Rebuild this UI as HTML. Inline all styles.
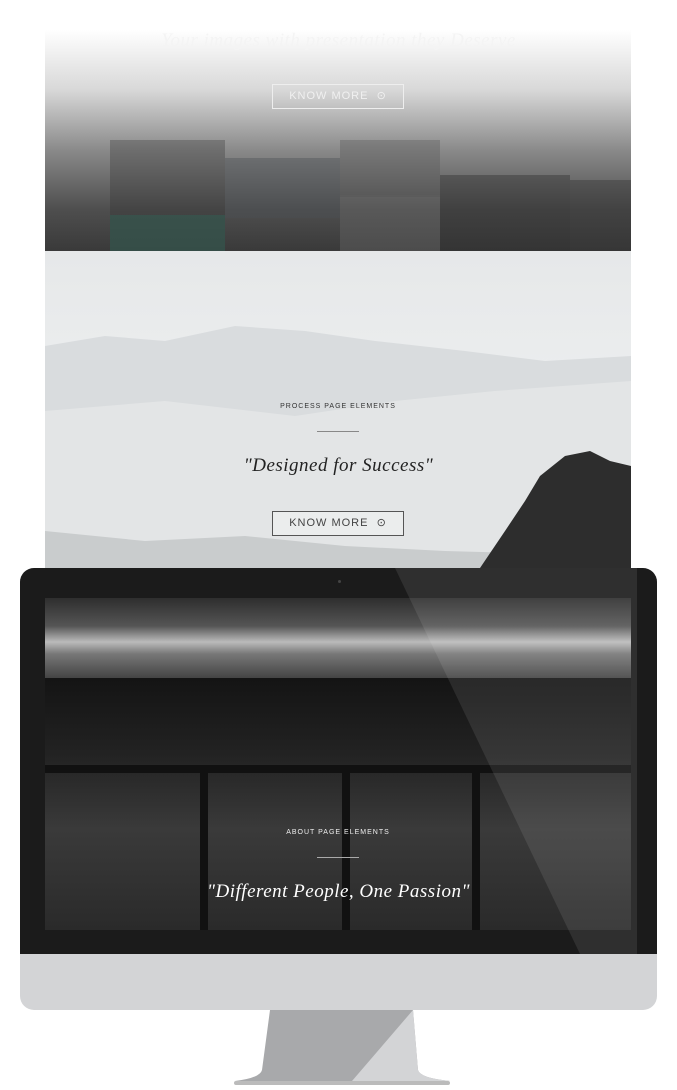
<!DOCTYPE html>
<html><head><meta charset="utf-8"><style>
body{margin:0;width:677px;height:1090px;background:#fff;position:relative;overflow:hidden;font-family:"Liberation Sans",sans-serif}
.a{position:absolute}
.btn{position:absolute;border:1px solid;font-size:11px;letter-spacing:1px;text-align:center;box-sizing:border-box}
.it{font-family:"Liberation Serif",serif;font-style:italic;position:absolute;width:100%;text-align:center;letter-spacing:.5px}
</style></head><body>
<div class="a" style="left:45px;top:0;width:586px;height:251px;background:linear-gradient(#fff 0px,#fff 30px,#d8d8d8 90px,#8a8a8a 150px,#4e4e4e 210px,#3a3a3a 250px)"></div>
<div class="a" style="left:110px;top:140px;width:115px;height:75px;background:#2f2f2f;opacity:.3"></div>
<div class="a" style="left:110px;top:215px;width:115px;height:36px;background:#35524b;opacity:.8"></div>
<div class="a" style="left:225px;top:158px;width:115px;height:60px;background:#4a4f55;opacity:.4"></div>
<div class="a" style="left:340px;top:140px;width:100px;height:55px;background:#555;opacity:.35"></div>
<div class="a" style="left:340px;top:197px;width:100px;height:54px;background:#6a6a6a;opacity:.4"></div>
<div class="a" style="left:440px;top:175px;width:130px;height:76px;background:#2c2c2c;opacity:.4"></div>
<div class="a" style="left:570px;top:180px;width:61px;height:71px;background:#333;opacity:.4"></div>
<div class="it" style="left:0;top:30px;color:#f4f4f4;font-size:19px">Your images with presentation they Deserve</div>
<div class="btn" style="left:272px;top:84px;width:132px;height:25px;line-height:23px;color:#f0f0f0;border-color:#eee">KNOW MORE &nbsp;⊙</div>
<div class="a" style="left:45px;top:251px;width:586px;height:317px;background:linear-gradient(#e6e8e9,#eef0f1 60%,#dfe2e3);overflow:hidden">
<svg width="586" height="317" style="position:absolute;left:0;top:0">
<path d="M0 95 L60 85 L120 90 L190 75 L260 80 L330 90 L420 100 L500 110 L586 105 L586 317 L0 317Z" fill="#d9dcde"/>
<path d="M0 160 L120 150 L250 165 L350 150 L450 140 L586 130 L586 317 L0 317Z" fill="#e3e5e6"/>
<path d="M0 280 L100 290 L200 285 L300 295 L400 300 L586 305 L586 317 L0 317Z" fill="#c9cccd"/>
<path d="M435 317 L460 280 L480 250 L495 225 L520 205 L545 200 L565 210 L586 215 L586 317Z" fill="#2d2d2d"/>
</svg></div>
<div class="a" style="left:45px;top:403px;width:586px;text-align:center;font-size:7px;letter-spacing:1px;color:#333">PROCESS PAGE ELEMENTS</div>
<div class="a" style="left:317px;top:431px;width:42px;height:1px;background:#888"></div>
<div class="it" style="left:0;top:455px;color:#222;font-size:19px">"Designed for Success"</div>
<div class="btn" style="left:272px;top:511px;width:132px;height:25px;line-height:23px;color:#444;border-color:#555;background:rgba(255,255,255,.3)">KNOW MORE &nbsp;⊙</div>
<div class="a" style="left:20px;top:568px;width:637px;height:442px;background:#d3d4d6;border-radius:14px;overflow:hidden">
<div class="a" style="left:0;top:0;width:637px;height:386px;background:#1b1b1b"></div>
</div>
<div class="a" style="left:338px;top:580px;width:3px;height:3px;border-radius:50%;background:#444"></div>
<div class="a" style="left:45px;top:598px;width:586px;height:80px;background:linear-gradient(#2e2e2e,#555 35%,#bbb 55%,#777 70%,#444)"></div>
<div class="a" style="left:45px;top:678px;width:586px;height:252px;background:linear-gradient(#141414,#222 30%,#3a3a3a 60%,#2a2a2a)"></div>
<div class="a" style="left:45px;top:765px;width:586px;height:8px;background:#111"></div>
<div class="a" style="left:200px;top:770px;width:8px;height:160px;background:#111"></div>
<div class="a" style="left:342px;top:770px;width:8px;height:160px;background:#111"></div>
<div class="a" style="left:472px;top:770px;width:8px;height:160px;background:#111"></div>
<div class="a" style="left:45px;top:829px;width:586px;text-align:center;font-size:7px;letter-spacing:1px;color:#eee">ABOUT PAGE ELEMENTS</div>
<div class="a" style="left:317px;top:857px;width:42px;height:1px;background:#aaa"></div>
<div class="it" style="left:0;top:881px;color:#fff;font-size:19px">"Different People, One Passion"</div>
<svg class="a" style="left:0;top:568px" width="677" height="386"><path d="M395 0 L637 0 L637 386 L580 386 Z" fill="#fff" opacity=".09"/></svg>
<svg class="a" style="left:0;top:1010px" width="677" height="80">
<path d="M270 0 L413 0 L418 60 Q420 68 450 71 L235 71 Q260 68 262 60 Z" fill="#a8a9ab"/>
<path d="M413 0 L418 60 Q420 68 450 71 L352 71 Z" fill="#d3d4d6"/>
<rect x="234" y="71" width="216" height="4" rx="2" fill="#bbb"/>
</svg>
</body></html>
